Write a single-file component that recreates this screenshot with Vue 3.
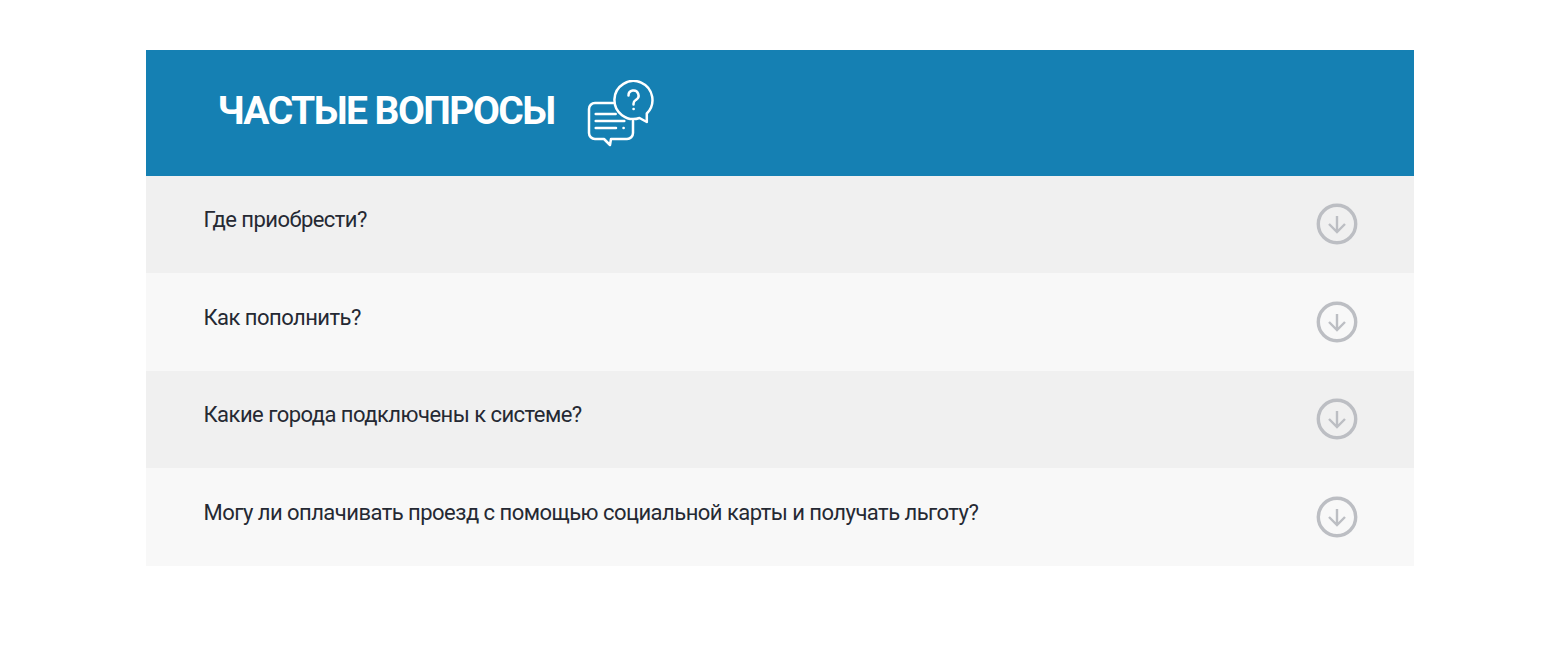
<script setup>
const items = [
  'Где приобрести?',
  'Как пополнить?',
  'Какие города подключены к системе?',
  'Могу ли оплачивать проезд с помощью социальной карты и получать льготу?'
]
</script>

<template>
  <main class="page">
    <section class="faq">
      <header class="head">
        <h2 class="title">ЧАСТЫЕ ВОПРОСЫ</h2>
        <svg class="bubbles" width="68" height="68" viewBox="0 0 68 68" fill="none" stroke="#fff" stroke-width="2.5" stroke-linecap="round" stroke-linejoin="round">
          <path d="M26 23H8a6 6 0 0 0-6 6v24a6 6 0 0 0 6 6h9l6 6 1-6h16a6 6 0 0 0 6-6V41" />
          <path d="M8.7 34h20M8.7 41h28.6M8.7 48h20.3" />
          <path d="M36.5 48h.2" />
          <path d="M59.8 33.5V42l-7.3-4A19 19 0 1 1 59.8 33.5z" />
          <path d="M41.5 15.5a5 5 0 1 1 7.5 4.3c-1.6 1-2.5 2-2.5 4v.7" />
          <path d="M46.5 29h.2" />
        </svg>
      </header>
      <div v-for="q in items" :key="q" class="row">
        <span class="q">{{ q }}</span>
        <svg class="arrow" width="42" height="42" viewBox="0 0 42 42" fill="none" stroke="#bcbec3">
          <circle cx="21" cy="21" r="18.7" stroke-width="3.4" />
          <path d="M21 13v16M13 21l8 8 8-8" stroke-width="2.4" />
        </svg>
      </div>
    </section>
  </main>
</template>

<style scoped>
.page {
  padding: 49.5px 145px 0 146px;
  font-family: Roboto, "Liberation Sans", sans-serif;
}
.head {
  height: 126px;
  background: #1580b3;
  display: flex;
  align-items: center;
  padding-left: 71.5px;
}
.title {
  margin: -2px 0 0;
  color: #fff;
  font-size: 39px;
  font-weight: 700;
  letter-spacing: -1.55px;
  line-height: 1;
}
.bubbles {
  margin-left: 32px;
  margin-top: 2px;
}
.row {
  height: 97.5px;
  box-sizing: border-box;
  display: flex;
  justify-content: space-between;
  padding: 27.5px 56px 0 57.5px;
  background: #f8f8f8;
}
.row:nth-of-type(odd) {
  background: #f0f0f0;
}
.q {
  font-size: 22px;
  line-height: 34px;
  color: #252933;
  font-weight: 400;
  letter-spacing: -0.53px;
}
.arrow {
  flex: none;
}
</style>
